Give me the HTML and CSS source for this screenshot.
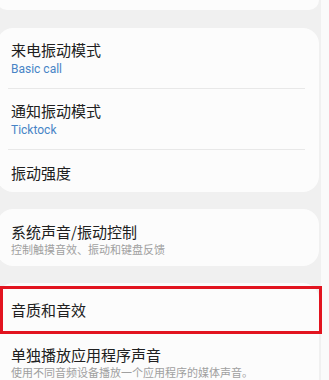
FILE: index.html
```html
<!DOCTYPE html>
<html lang="zh-CN">
<head>
<meta charset="utf-8">
<title>声音和振动</title>
<link rel="stylesheet" href="styles.css">
</head>
<body>
<div class="screen">
  <div class="card card-top"></div>

  <div class="card">
    <div class="row row-2line">
      <div class="title">来电振动模式</div>
      <div class="sub sub-blue">Basic call</div>
    </div>
    <div class="divider"></div>
    <div class="row row-2line">
      <div class="title">通知振动模式</div>
      <div class="sub sub-blue">Ticktock</div>
    </div>
    <div class="divider"></div>
    <div class="row row-1line">
      <div class="title">振动强度</div>
    </div>
  </div>

  <div class="card">
    <div class="row row-sys">
      <div class="title">系统声音/振动控制</div>
      <div class="sub sub-gray">控制触摸音效、振动和键盘反馈</div>
    </div>
  </div>

  <div class="card card-last">
    <div class="row row-effect">
      <div class="title">音质和音效</div>
    </div>
    <div class="row row-app">
      <div class="title">单独播放应用程序声音</div>
      <div class="sub sub-gray">使用不同音频设备播放一个应用程序的媒体声音。</div>
    </div>
    <div class="highlight"></div>
  </div>
</div>
</body>
</html>
```

FILE: styles.css
```css
html, body {
  margin: 0;
  padding: 0;
}

body {
  width: 329px;
  height: 380px;
  overflow: hidden;
  background: #fafafa;
  font-family: "Noto Sans CJK SC", "Noto Sans", Roboto, sans-serif;
}

.screen {
  width: 321px;
  height: 380px;
  background: #f0f0f0;
  display: flex;
  flex-direction: column;
}

.card {
  margin-left: -3px;
  width: 322px;
  background: #fcfcfc;
  border-radius: 16px;
  margin-bottom: 17px;
  flex-shrink: 0;
}

.card-top {
  height: 10px;
  border-radius: 0 0 16px 16px;
  margin-bottom: 18px;
}

.card-last {
  position: relative;
  flex: 1;
  border-radius: 16px 16px 0 0;
  margin-bottom: 0;
}

.row {
  padding-left: 14px;
  padding-right: 14px;
}

.row-2line {
  padding-top: 12px;
  padding-bottom: 11px;
}

.row-1line {
  padding-top: 13px;
  padding-bottom: 9px;
}

.row-sys {
  padding-top: 13px;
  padding-bottom: 10px;
}

.row-effect {
  height: 54px;
  box-sizing: border-box;
  padding-top: 17px;
}

.row-app {
  padding-top: 8px;
}

.title {
  font-size: 15px;
  line-height: 20px;
  color: #202020;
}

.sub {
  line-height: 16px;
}

.sub-blue {
  margin-top: 1px;
  font-family: Roboto, "Noto Sans", sans-serif;
  font-size: 12px;
  color: #4784c6;
}

.sub-gray {
  font-size: 11px;
  line-height: 14px;
  color: #a0a0a0;
}

.divider {
  height: 1px;
  background: #e8e8e8;
  margin: 0 14px 0 11px;
}

.highlight {
  position: absolute;
  left: 3px;
  top: 3px;
  width: 322px;
  height: 48px;
  box-sizing: border-box;
  border: 3px solid #e2141f;
}
```
